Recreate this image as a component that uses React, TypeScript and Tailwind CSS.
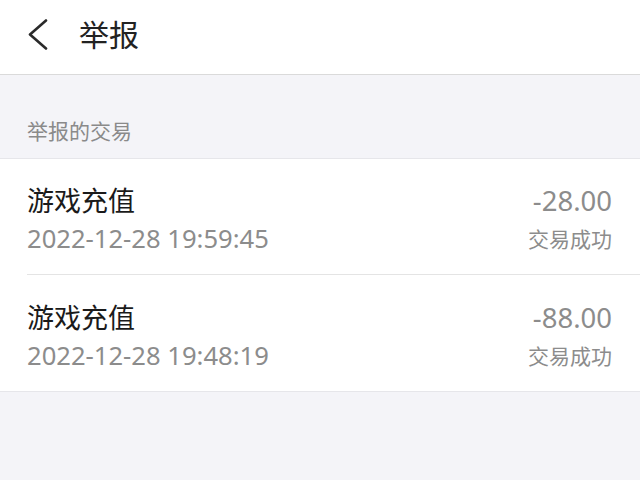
const font = { fontFamily: '"Noto Sans", "Noto Sans CJK SC", sans-serif' }

type Tx = { title: string; time: string; amount: string; status: string }

const items: Tx[] = [
  { title: "游戏充值", time: "2022-12-28 19:59:45", amount: "-28.00", status: "交易成功" },
  { title: "游戏充值", time: "2022-12-28 19:48:19", amount: "-88.00", status: "交易成功" },
]

export default function App() {
  return (
    <div className="w-[640px] h-[480px] bg-[#f4f4f8] overflow-hidden" style={font}>
      {/* header */}
      <div className="h-[75px] bg-white border-b border-[#dadada] flex items-center">
        <svg className="ml-[27px] mb-[4px]" width="22" height="32" viewBox="0 0 22 32" fill="none">
          <path d="M19 1.5 L3 15.5 L19 29.5" stroke="#2a2a2a" strokeWidth="2.6" strokeLinecap="round" strokeLinejoin="round" />
        </svg>
        <span className="ml-[30px] mb-[4px] text-[30px] leading-none text-[#222]">举报</span>
      </div>

      {/* section label */}
      <div className="h-[83px] pl-[27px] flex items-center pt-[30px]">
        <span className="text-[21px] leading-none text-[#8a8a8a]">举报的交易</span>
      </div>

      {/* list */}
      <div className="bg-white border-t border-b border-[#e6e6ea] pl-[27px]">
        {items.map((it, i) => (
          <div
            key={i}
            className={
              "h-[116px] pr-[28px] pt-[5px] flex items-center justify-between " +
              (i < items.length - 1 ? "border-b border-[#e4e4e4]" : "")
            }
          >
            <div className="flex flex-col">
              <span className="text-[27px] leading-[34px] text-[#1a1a1a]">{it.title}</span>
              <span className="mt-[6px] text-[25.6px] leading-[30px] text-[#8c8c8c]">{it.time}</span>
            </div>
            <div className="flex flex-col items-end">
              <span className="text-[27.5px] leading-[34px] text-[#8c8c8c]">{it.amount}</span>
              <span className="mt-[6px] text-[21px] leading-[30px] text-[#8c8c8c]">{it.status}</span>
            </div>
          </div>
        ))}
      </div>
    </div>
  )
}
